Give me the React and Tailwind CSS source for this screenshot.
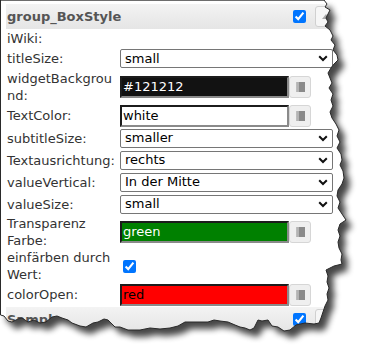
import React from 'react'

// torn-paper outline of the screenshot (right + bottom edge)
const TORN = [
  [0.5, 0], [324, 0], [327, 4], [325, 7], [330, 10], [328, 14], [326, 18], [328, 22], [325, 26], [330, 30],
  [333, 36], [331, 40], [335, 45], [333, 50], [337, 55], [338, 60], [334, 64], [331, 68], [328, 73], [330, 78],
  [332, 83], [329, 88], [333, 94], [331, 100], [333, 106], [330, 112], [332, 118], [336, 124], [339, 130],
  [337, 136], [340, 142], [337, 148], [341, 154], [342, 160], [340, 165], [343, 171], [344, 178], [342, 184],
  [338, 190], [337, 196], [340, 202], [338, 208], [342, 214], [346, 220], [340, 224], [338, 230], [340, 236],
  [338, 242], [339, 248], [342, 254], [341, 260], [342, 264], [334, 266], [326, 270], [328, 276], [327, 282],
  [329, 288], [327, 294], [328, 300], [325, 306], [323, 312], [321, 318], [319, 323],
  [314, 324], [305, 323], [296, 325], [290, 330], [284, 331], [278, 327], [272, 326], [268, 320], [262, 321],
  [258, 320], [254, 328], [250, 330], [245, 328], [240, 327], [235, 325], [228, 322], [220, 321], [214, 320],
  [208, 322], [200, 322], [193, 322], [185, 322], [178, 326], [170, 328], [160, 329], [150, 328], [140, 330],
  [128, 330], [120, 327], [115, 327], [108, 320], [104, 319], [98, 322], [93, 323], [86, 327], [80, 326],
  [72, 323], [68, 320], [62, 318], [57, 316], [52, 317], [46, 322], [40, 323], [34, 320], [28, 322], [22, 318],
  [18, 319], [12, 322], [8, 321], [4, 316], [0.5, 315],
]
const tornPts = TORN.map(p => p.join(',')).join(' ')

function TornEdge() {
  return (
    <svg className="absolute inset-0 pointer-events-none" width="369" height="358" viewBox="0 0 369 358">
      <defs>
        <mask id="outside">
          <rect x="-20" y="-20" width="420" height="400" fill="white" />
          <polygon points={tornPts} fill="black" />
        </mask>
        <filter id="blur" x="-10%" y="-10%" width="120%" height="120%">
          <feGaussianBlur stdDeviation="3.2" />
        </filter>
      </defs>
      <g mask="url(#outside)">
        <rect x="0" y="0" width="369" height="358" fill="white" />
        <polygon points={tornPts} transform="translate(6 7)" fill="#000" opacity="0.72" filter="url(#blur)" />
      </g>
      <polygon points={tornPts} fill="none" stroke="#2a2a2a" strokeWidth="1" />
    </svg>
  )
}

function Chevron() {
  return (
    <svg width="10" height="7" viewBox="0 0 10 7">
      <path d="M1.2 1.2 L5 5 L8.8 1.2" fill="none" stroke="#111" strokeWidth="2" />
    </svg>
  )
}

function PickerIcon() {
  return (
    <svg width="9" height="10" viewBox="0 0 9 10">
      <rect x="1" y="0" width="8" height="10" fill="#8a8a8a" />
      <rect x="1" y="0" width="2" height="10" fill="#b4b4b4" />
      <path d="M0 1h1M0 3h1M0 5h1M0 7h1M0 9h1" stroke="#8a8a8a" strokeWidth="1" />
    </svg>
  )
}

function Select({ value }) {
  return (
    <div className="w-[213px] h-[19px] border border-[#767676] rounded-[2px] bg-white flex items-center justify-between pl-[4px] pr-[4px] text-[13px] text-black">
      <span>{value}</span>
      <Chevron />
    </div>
  )
}

function ColorInput({ value, color }) {
  return (
    <div className="flex items-center">
      <div className={`w-[169px] h-[22px] border-2 border-t-[#1c1c1c] border-l-[#1c1c1c] border-r-[#8a8a8a] border-b-[#8a8a8a] flex items-center pl-[1px] text-[13px] ${color}`}>
        {value}
      </div>
      <div className="w-[22px] h-[22px] bg-[#efefef] border border-[#d6d6d6] rounded-[3px] flex items-center justify-center">
        <PickerIcon />
      </div>
    </div>
  )
}

function Row({ label, h, children }) {
  return (
    <div className={`flex items-center ${h}`}>
      <div className="w-[120px] shrink-0 pl-[7px] pr-[2px] text-[13px] leading-[17px] text-[#333] [overflow-wrap:anywhere]">
        {label}
      </div>
      {children}
    </div>
  )
}

function GroupHeader({ title }) {
  return (
    <div className="ml-[6px] h-[25px] flex items-center bg-linear-to-b from-[#f3f3f3] to-[#e5e5e5]">
      <span className="w-[287px] pl-[1px] font-bold text-[13px] text-[#555]">{title}</span>
      <input type="checkbox" defaultChecked className="w-[13px] h-[13px]" />
      <div className="ml-[9px] w-[22px] h-[21px] border border-[#d0d0d0] rounded-[3px] bg-[#f6f6f6] flex items-center justify-center">
        <svg width="8" height="5" viewBox="0 0 8 5">
          <path d="M0 5 L4 0 L8 5 Z" fill="#aaa" />
        </svg>
      </div>
    </div>
  )
}

export default function App() {
  return (
    <div className="relative w-[369px] h-[358px] bg-white overflow-hidden font-['DejaVu_Sans',Verdana,sans-serif]">
      <div className="border-t border-[#b0b0b0] pt-[3px]">
        <GroupHeader title="group_BoxStyle" />
        <Row label="iWiki:" h="h-[19px]" />
        <Row label="titleSize:" h="h-[21px]"><Select value="small" /></Row>
        <Row label="widgetBackground:" h="h-[35px]"><ColorInput value="#121212" color="bg-[#121212] text-white" /></Row>
        <Row label="TextColor:" h="h-[23px]"><ColorInput value="white" color="bg-white text-black" /></Row>
        <Row label="subtitleSize:" h="h-[22px]"><Select value="smaller" /></Row>
        <Row label="Textausrichtung:" h="h-[22px]"><Select value="rechts" /></Row>
        <Row label="valueVertical:" h="h-[22px]"><Select value="In der Mitte" /></Row>
        <Row label="valueSize:" h="h-[22px]"><Select value="small" /></Row>
        <Row label="Transparenz Farbe:" h="h-[34px]"><ColorInput value="green" color="bg-[#008000] text-white" /></Row>
        <Row label="einfärben durch Wert:" h="h-[34px]">
          <input type="checkbox" defaultChecked className="ml-[3px] w-[13px] h-[13px]" />
        </Row>
        <Row label="colorOpen:" h="h-[23px]"><ColorInput value="red" color="bg-[#ff0000] text-black" /></Row>
        <div className="mt-[1px]">
          <GroupHeader title="Sample" />
        </div>
      </div>
      <TornEdge />
    </div>
  )
}
